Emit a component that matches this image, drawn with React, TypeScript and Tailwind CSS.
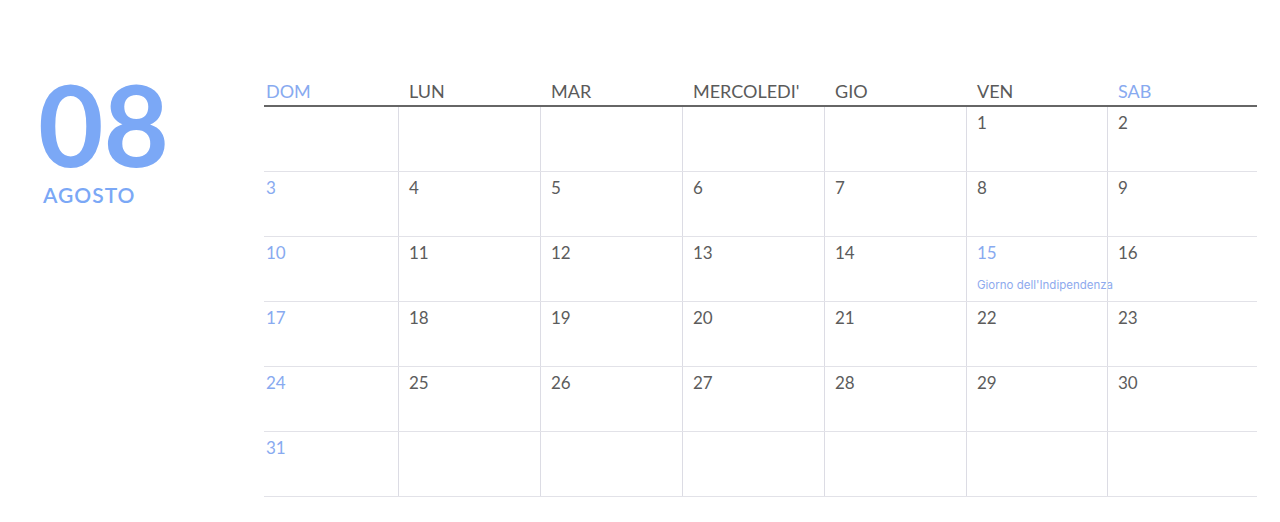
const days = ["DOM", "LUN", "MAR", "MERCOLEDI'", "GIO", "VEN", "SAB"];

const weeks: (number | null)[][] = [
  [null, null, null, null, null, 1, 2],
  [3, 4, 5, 6, 7, 8, 9],
  [10, 11, 12, 13, 14, 15, 16],
  [17, 18, 19, 20, 21, 22, 23],
  [24, 25, 26, 27, 28, 29, 30],
  [31, null, null, null, null, null, null],
];

const holidays: Record<number, string> = {
  15: "Giorno dell'Indipendenza",
};

const cols = "grid grid-cols-[134px_142px_142px_142px_142px_141px_150px]";

export default function App() {
  return (
    <div className="w-[1280px] h-[522px] bg-white flex font-['Lato',sans-serif] overflow-hidden">
      <div className="w-[264px] pl-[38px] pt-[73px]">
        <div className="text-[113px] leading-[100px] font-bold text-[#7ba8f6]">
          08
        </div>
        <div className="mt-[11px] ml-[5px] text-[21px] leading-none font-semibold text-[#7ba8f6] tracking-[1px]">
          AGOSTO
        </div>
      </div>

      <div className="pt-[77px]">
        <div className={`${cols} h-[30px] border-b-2 border-[#666]`}>
          {days.map((d, i) => (
            <div
              key={d}
              className={`pt-[2px] text-[18px] leading-6 ${
                i === 0 ? "pl-[2px]" : "pl-[11px]"
              } ${i === 0 || i === 6 ? "text-[#88aaf0]" : "text-[#5a5a5a]"}`}
            >
              {d}
            </div>
          ))}
        </div>

        {weeks.map((week, r) => (
          <div key={r} className={`${cols} h-[65px] border-b border-[#e2e2e8]`}>
            {week.map((n, i) => (
              <div
                key={i}
                className={`pt-[4px] ${
                  i === 0 ? "pl-[2px]" : "pl-[10px] border-l border-[#dcdce4]"
                }`}
              >
                {n !== null && (
                  <div
                    className={`text-[17px] leading-6 ${
                      i === 0 || holidays[n] ? "text-[#88aaf0]" : "text-[#5c5c5c]"
                    }`}
                  >
                    {n}
                  </div>
                )}
                {n !== null && holidays[n] && (
                  <div className="mt-[13px] whitespace-nowrap font-['Inter',sans-serif] text-[11.5px] leading-[14px] text-[#8eaaee]">
                    {holidays[n]}
                  </div>
                )}
              </div>
            ))}
          </div>
        ))}
      </div>
    </div>
  );
}
